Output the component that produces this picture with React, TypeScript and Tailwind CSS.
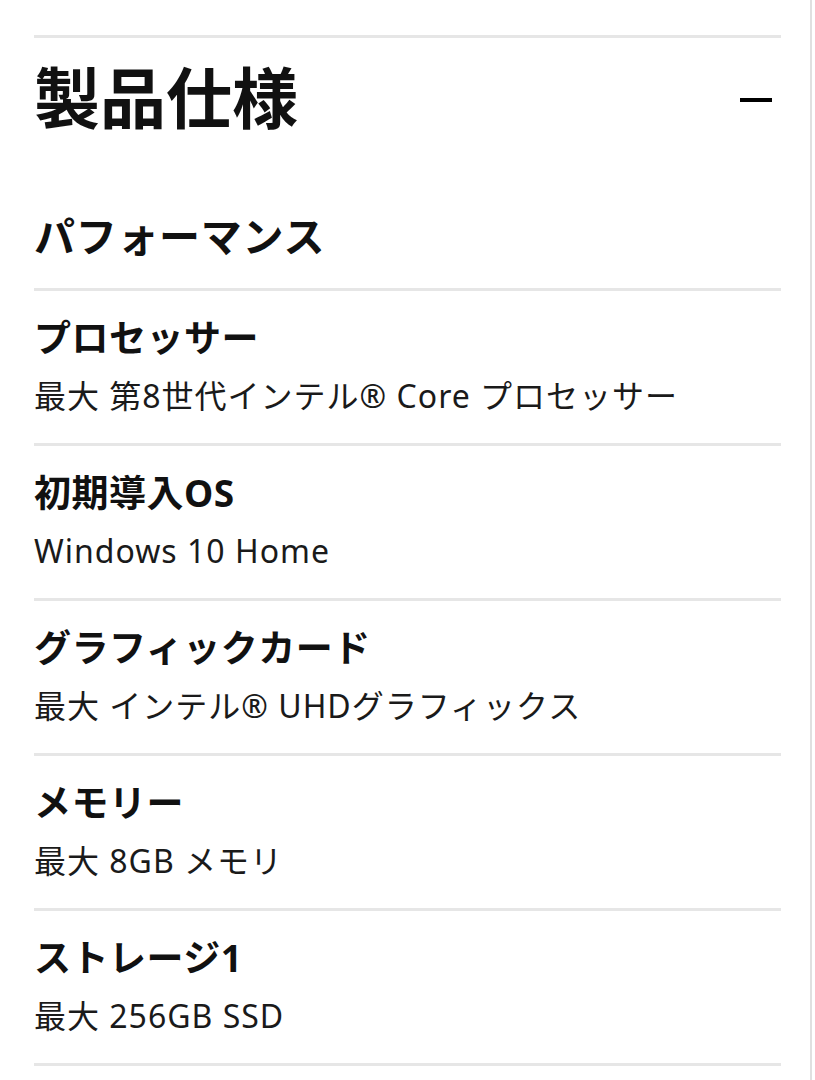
const specs = [
  { label: 'プロセッサー', value: '最大 第8世代インテル® Core プロセッサー' },
  { label: '初期導入OS', value: 'Windows 10 Home' },
  { label: 'グラフィックカード', value: '最大 インテル® UHDグラフィックス' },
  { label: 'メモリー', value: '最大 8GB メモリ' },
  { label: 'ストレージ1', value: '最大 256GB SSD' },
];

function SpecRow({ label, value }: { label: string; value: string }) {
  return (
    <div className="border-t-[3px] border-[#e6e6e6] pt-[25px] pb-[27px]">
      <div className="text-[37px] leading-[44px] font-bold tracking-[0.5px] text-[#111]">{label}</div>
      <div className="mt-[16px] text-[32px] leading-[40px] tracking-[1px] text-[#1a1a1a]">{value}</div>
    </div>
  );
}

export default function App() {
  return (
    <div
      className="min-h-screen bg-white flex"
      style={{ fontFamily: '"Noto Sans", "Noto Sans CJK JP", sans-serif' }}
    >
      <div className="w-[812px] min-h-screen border-r-[2px] border-[#e0e0e0] pl-[34px] pr-[29px] pt-[35px]">
        {/* Section header */}
        <div className="border-t-[3px] border-[#e6e6e6] pt-[19px]">
          <div className="flex items-center justify-between">
            <h1 className="text-[66px] leading-[80px] font-bold text-[#111]">製品仕様</h1>
            <div className="mt-[5px] mr-[9px] h-[4px] w-[32px] bg-black" />
          </div>
        </div>

        <h2 className="mt-[75px] mb-[28px] text-[41px] leading-[48px] font-bold tracking-[0.7px] text-[#111]">
          パフォーマンス
        </h2>

        {specs.map((s) => (
          <SpecRow key={s.label} label={s.label} value={s.value} />
        ))}
        <div className="border-t-[3px] border-[#e6e6e6]" />
      </div>
    </div>
  );
}
